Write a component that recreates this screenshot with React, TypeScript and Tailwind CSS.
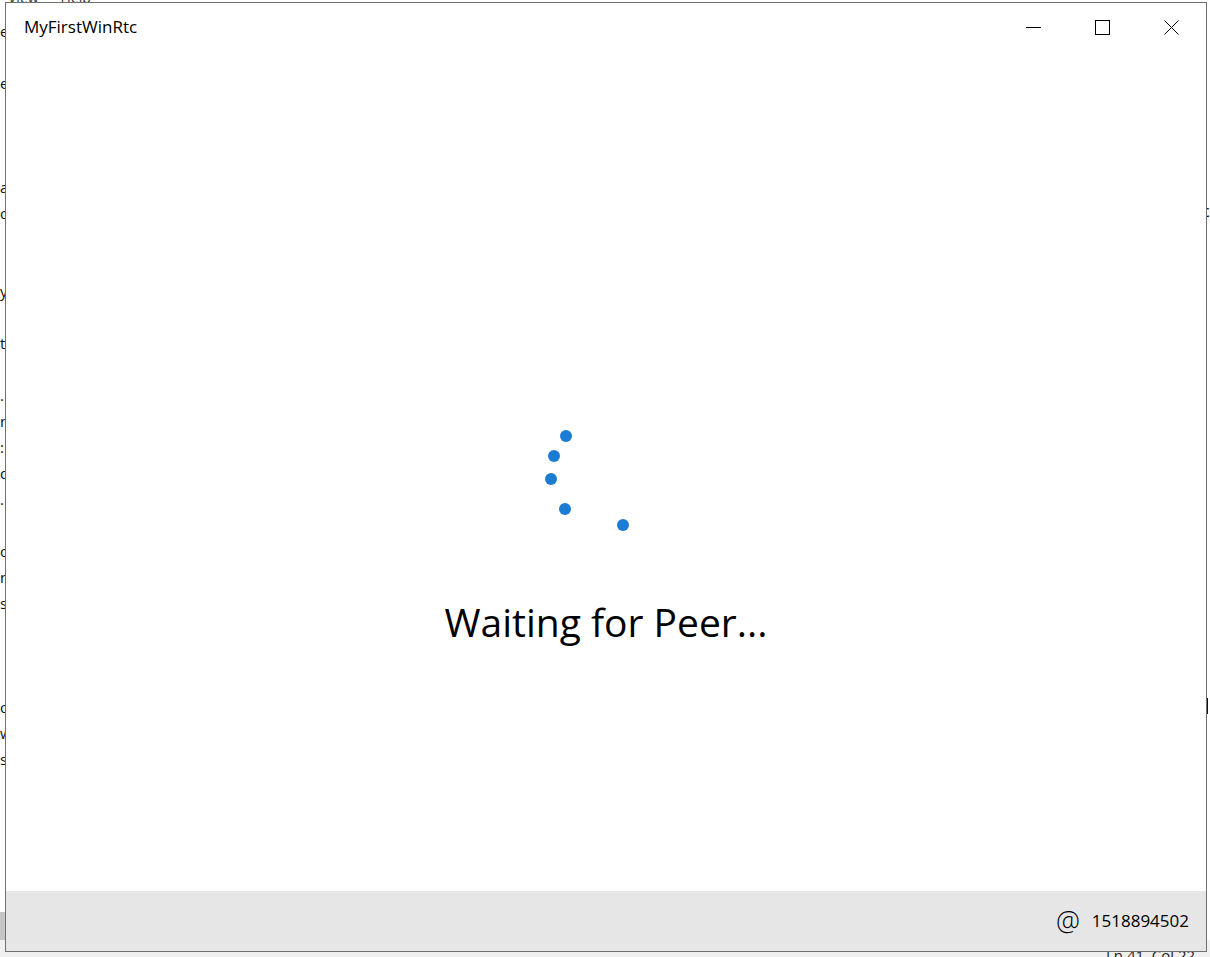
import React from "react";

const leftLines: string[] = [
  "e", "", "e", "", "", "", "a", "o", "", "", "y", "", "t", "", ".", "n", ":", "d", ".", "",
  "o", "n", "s", "", "", "", "o", "w", "s",
];

const ringDots = [
  [21, 22],
  [9, 42],
  [6, 65],
  [20, 95],
  [78, 111],
];

const CaptionButton = ({ children }: { children: React.ReactNode }) => (
  <div className="flex h-full w-[69px] items-center justify-center">{children}</div>
);

const App = () => {
  return (
    <div
      className="relative h-[957px] w-[1210px] overflow-hidden bg-[#f4f4f4] text-black"
      style={{ fontFamily: '"Open Sans", "Noto Sans", sans-serif' }}
    >
      {/* underlying editor window peeking out behind the app */}
      <div className="absolute left-0 top-0 h-[957px] w-[1210px] bg-white">
        <div className="-mt-[9px] flex gap-[22px] pl-[8px] text-[14px] leading-[14px] text-[#333]">
          <span>View</span>
          <span>Help</span>
        </div>
        <div className="mt-[13px] flex flex-col text-[15px] leading-[26px] text-[#111]">
          {leftLines.map((l, i) => (
            <div key={i} className="h-[26px]">
              {l}
            </div>
          ))}
        </div>
        <div className="absolute left-0 top-[912px] h-[28px] w-[6px] bg-[#c6c6c6]" />
        <div className="absolute left-0 top-[940px] h-[17px] w-[1210px] bg-[#f0f0f0]" />
        <div className="absolute left-[1106px] top-[948px] text-[15px] leading-[15px] text-[#222]">
          Ln 41, Col 22
        </div>
        <div className="absolute left-[1202px] top-[203px] text-[16px] leading-[16px]">c</div>
        <div className="absolute left-[1203px] top-[698px] h-[16px] w-[5px] border-2 border-[#111]" />
      </div>

      {/* app window */}
      <div className="absolute left-[5px] top-[2px] flex h-[950px] w-[1202px] flex-col border border-[#707070] bg-white">
        <div className="flex h-[48px] shrink-0 items-center">
          <div className="pl-[18px] text-[17px] leading-[22px] text-black">MyFirstWinRtc</div>
          <div className="ml-auto flex h-full">
            <CaptionButton>
              <svg width="15" height="15" viewBox="0 0 15 15">
                <path d="M0 7.5h15" stroke="#000" strokeWidth="1" />
              </svg>
            </CaptionButton>
            <CaptionButton>
              <svg width="15" height="15" viewBox="0 0 15 15">
                <rect x="0.5" y="0.5" width="14" height="14" fill="none" stroke="#000" strokeWidth="1" />
              </svg>
            </CaptionButton>
            <CaptionButton>
              <svg width="15" height="15" viewBox="0 0 15 15">
                <path d="M0.5 0.5L14.5 14.5M14.5 0.5L0.5 14.5" stroke="#000" strokeWidth="1" />
              </svg>
            </CaptionButton>
          </div>
        </div>

        <div className="flex flex-1 flex-col items-center pt-[363px]">
          <svg width="120" height="120" viewBox="0 0 120 120" className="mr-[2px]">
            {ringDots.map(([x, y], i) => (
              <circle key={i} cx={x} cy={y} r="6" fill="#1c7bd3" />
            ))}
          </svg>
          <div className="mt-[62px] text-[39px] leading-[52px] text-black">Waiting for Peer...</div>
        </div>

        <div className="flex h-[60px] shrink-0 items-center justify-end gap-[12px] bg-[#e6e6e6] pr-[17px]">
          <span className="text-[27px] font-light leading-[30px]">@</span>
          <span className="text-[17px] leading-[24px]">1518894502</span>
        </div>
      </div>
    </div>
  );
};

export default App;
